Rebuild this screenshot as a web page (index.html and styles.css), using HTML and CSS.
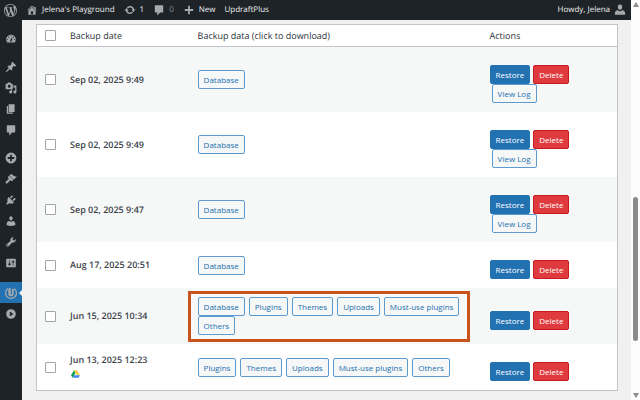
FILE: index.html
```html
<!DOCTYPE html>
<html lang="en">

<head>
    <meta charset="UTF-8">
    <meta name="viewport" content="width=device-width, initial-scale=1.0">
    <title>UpdraftPlus Backups</title>
    <link rel="stylesheet" href="styles.css">
</head>

<body>

    <div class="page">
        <header class="admin-bar">
            <a href="#" class="wp-logo" aria-label="About WordPress">
                <svg class="icon icon-wp" viewBox="0 0 20 20"><path d="M20 10c0-5.51-4.49-10-10-10C4.48 0 0 4.49 0 10c0 5.52 4.48 10 10 10 5.51 0 10-4.48 10-10zM7.78 15.37L4.37 6.22c.55-.02 1.17-.08 1.17-.08.5-.06.44-1.13-.06-1.11 0 0-1.45.11-2.37.11-.18 0-.37 0-.58-.01C4.12 2.69 6.87 1.11 10 1.11c2.33 0 4.45.87 6.05 2.34-.68-.11-1.65.39-1.65 1.58 0 .74.45 1.36.9 2.1.35.61.55 1.36.55 2.46 0 1.49-1.4 5-1.4 5l-3.03-8.37c.54-.02.82-.17.82-.17.5-.05.44-1.25-.06-1.22 0 0-1.44.12-2.38.12-.87 0-2.33-.12-2.33-.12-.5-.03-.56 1.2-.06 1.22l.92.08 1.26 3.41zM17.41 10c.24-.64.74-1.87.43-4.25.7 1.29 1.05 2.71 1.05 4.25 0 3.29-1.73 6.24-4.4 7.78.97-2.59 1.94-5.2 2.92-7.78zM6.1 18.09C3.12 16.65 1.11 13.53 1.11 10c0-1.3.23-2.48.72-3.59C3.25 10.3 4.67 14.2 6.1 18.09zm4.03-6.63l2.58 6.98c-.86.29-1.76.45-2.71.45-.79 0-1.57-.11-2.29-.33.81-2.38 1.62-4.74 2.42-7.1z"/></svg>
            </a>
            <a href="#" class="bar-link">
                <svg class="icon" viewBox="0 0 20 20"><path d="M16 8.5l1.53 1.53-1.06 1.06L10 4.6l-6.47 6.49-1.06-1.06L10 2.5l4 4v-2h2v4zm-6-2.46l6 5.99V18H4v-5.97zM12 17v-5H8v5h4z"/></svg>
                Jelena's Playground
            </a>
            <a href="#" class="bar-link">
                <svg class="icon" viewBox="0 0 20 20"><path d="M10.2 3.28c3.53 0 6.43 2.61 6.92 6h2.08l-3.5 4-3.5-4h2.32c-.45-1.97-2.21-3.45-4.32-3.45-1.45 0-2.73.71-3.54 1.78L4.95 5.66C6.23 4.2 8.11 3.28 10.2 3.28zm-.4 13.44c-3.52 0-6.43-2.61-6.92-6H.8l3.5-4c1.17 1.33 2.33 2.67 3.5 4H5.48c.45 1.97 2.21 3.45 4.32 3.45 1.45 0 2.73-.71 3.54-1.78l1.71 1.95c-1.28 1.46-3.15 2.38-5.25 2.38z"/></svg>
                1
            </a>
            <a href="#" class="bar-link muted">
                <svg class="icon" viewBox="0 0 20 20"><path d="M4 2h12c.6 0 1 .4 1 1v10c0 .6-.4 1-1 1h-4l-5 5v-5H4c-.6 0-1-.4-1-1V3c0-.6.4-1 1-1z"/></svg>
                0
            </a>
            <a href="#" class="bar-link">
                <svg class="icon" viewBox="0 0 20 20"><path d="M17 8.500v3h-5.500v5.500h-3v-5.500H3v-3h5.500V3h3v5.500z"/></svg>
                New
            </a>
            <a href="#" class="bar-link">UpdraftPlus</a>
            <a href="#" class="bar-link account">
                Howdy, Jelena
                <svg class="icon" viewBox="0 0 20 20"><path d="M10 9.500c-2.600 0-3.600-2.500-3.600-4.700C6.400 2.400 7.800 1 10 1s3.600 1.400 3.600 3.800c0 2.200-1 4.700-3.600 4.700zM6 10.500l4 2 4-2c3 .4 4.500 2.500 4.500 5V18h-17v-2.500c0-2.500 1.500-4.600 4.500-5z"/></svg>
            </a>
        </header>

        <div class="wrap">
            <nav class="side-menu">
                <a href="#" class="menu-item" aria-label="Dashboard"><svg class="icon" viewBox="0 0 20 20"><path fill-rule="evenodd" d="M3.76 16h12.48c1.1-1.37 1.76-3.11 1.76-5 0-4.42-3.58-8-8-8s-8 3.58-8 8c0 1.89.66 3.63 1.76 5zM10 4c.55 0 1 .45 1 1s-.45 1-1 1-1-.45-1-1 .45-1 1-1zM6 6c.55 0 1 .45 1 1s-.45 1-1 1-1-.45-1-1 .45-1 1-1zm8 0c.55 0 1 .45 1 1s-.45 1-1 1-1-.45-1-1 .45-1 1-1zm-5.37 5.55L12 7v6c0 1.1-.9 2-2 2s-2-.9-2-2c0-.57.24-1.08.63-1.45zM4 10c.55 0 1 .45 1 1s-.45 1-1 1-1-.45-1-1 .45-1 1-1zm12 0c.55 0 1 .45 1 1s-.45 1-1 1-1-.45-1-1 .45-1 1-1zm-5 3c0-.55-.45-1-1-1s-1 .45-1 1 .45 1 1 1 1-.45 1-1z"/></svg></a>
                <a href="#" class="menu-item group" aria-label="Posts"><svg class="icon" viewBox="0 0 20 20"><path d="M10.440 3.020l1.820-1.820 6.360 6.350-1.830 1.820c-1.050-.68-2.480-.57-3.410.36l-.75.75c-.92.93-1.040 2.350-.35 3.410l-1.830 1.820-2.410-2.410-2.800 2.790c-.42.42-3.380 2.710-3.800 2.290s1.860-3.390 2.280-3.810l2.790-2.790L4.100 9.360l1.830-1.820c1.050.69 2.480.57 3.400-.36l.75-.75c.93-.92 1.050-2.350.36-3.410z"/></svg></a>
                <a href="#" class="menu-item" aria-label="Media"><svg class="icon" viewBox="0 0 20 20"><path d="M13 11V4c0-.55-.45-1-1-1h-1.670L9 1H5L3.670 3H2c-.55 0-1 .45-1 1v7c0 .55.45 1 1 1h10c.55 0 1-.45 1-1zM7 4.500c1.380 0 2.500 1.120 2.500 2.500S8.380 9.500 7 9.500 4.500 8.380 4.500 7 5.620 4.500 7 4.500zM14 6h5v10.500c0 1.380-1.120 2.500-2.500 2.500S14 17.880 14 16.500s1.120-2.500 2.500-2.500c.17 0 .34.02.5.05V9h-3V6zm-4 8.050V13h2v3.500c0 1.380-1.120 2.500-2.500 2.500S7 17.880 7 16.500 8.120 14 9.500 14c.17 0 .34.02.5.05z" fill-rule="evenodd"/></svg></a>
                <a href="#" class="menu-item" aria-label="Pages"><svg class="icon" viewBox="0 0 20 20"><path d="M6 15V2h10v13H6zm-1 1h8v2H3V5h2v11z"/></svg></a>
                <a href="#" class="menu-item" aria-label="Comments"><svg class="icon" viewBox="0 0 20 20"><path d="M4 2h12c.6 0 1 .4 1 1v10c0 .6-.4 1-1 1h-4l-5 5v-5H4c-.6 0-1-.4-1-1V3c0-.6.4-1 1-1z"/></svg></a>
                <a href="#" class="menu-item group" aria-label="Add-ons"><svg class="icon" viewBox="0 0 20 20"><path fill-rule="evenodd" d="M10 1a9 9 0 1 0 0 18 9 9 0 0 0 0-18zM8.500 4.500h3v4h4v3h-4v4h-3v-4h-4v-3h4z"/></svg></a>
                <a href="#" class="menu-item" aria-label="Appearance"><svg class="icon" viewBox="0 0 20 20"><path d="M14.480 11.060L7.410 3.990l1.500-1.500c.5-.56 2.300-.47 3.510.32 1.210.8 1.430 1.280 2.910 2.100 1.180.64 2.450 1.260 4.450.85zm-.71.71L6.700 4.700 4.930 6.470c-.39.39-.39 1.020 0 1.410l1.060 1.060c.39.39.39 1.030 0 1.420-.6.6-1.430 1.110-2.210 1.690-.35.26-.7.53-1.010.84C1.430 14.230.4 16.080 1.400 17.070c.99 1 2.840-.03 4.180-1.360.31-.31.58-.66.85-1.020.57-.78 1.080-1.610 1.690-2.210.39-.39 1.020-.39 1.410 0l1.060 1.060c.39.39 1.020.39 1.410 0z"/></svg></a>
                <a href="#" class="menu-item" aria-label="Plugins"><svg class="icon" viewBox="0 0 20 20"><path d="M13.110 4.360L9.870 7.600 8 5.730l3.240-3.240c.35-.34 1.050-.2 1.560.32.52.51.66 1.210.31 1.550zm-8 1.770l.91-1.120 9.010 9.010-1.190.84c-.71.71-2.630 1.160-3.820 1.160H6.140L4.900 17.260c-.59.59-1.540.59-2.120 0-.59-.58-.59-1.530 0-2.120l1.240-1.240v-3.880c0-1.130.4-3.190 1.090-3.890zm7.260 3.970l3.240-3.240c.34-.35 1.040-.21 1.550.31.52.51.66 1.210.31 1.550l-3.240 3.250z"/></svg></a>
                <a href="#" class="menu-item" aria-label="Users"><svg class="icon" viewBox="0 0 20 20"><path d="M10 9.250c-2.270 0-2.730-3.440-2.730-3.440C7 4.020 7.820 2 9.970 2c2.160 0 2.980 2.020 2.710 3.810 0 0-.41 3.440-2.680 3.440zm0 2.570L12.720 10c2.390 0 4.520 2.330 4.520 4.530v2.490s-3.650 1.130-7.240 1.130c-3.650 0-7.240-1.130-7.240-1.130v-2.490c0-2.250 1.940-4.480 4.470-4.480z"/></svg></a>
                <a href="#" class="menu-item" aria-label="Tools"><svg class="icon" viewBox="0 0 20 20"><path fill-rule="evenodd" d="M16.680 9.770c-1.340 1.340-3.300 1.670-4.950.99l-5.410 6.520c-.99.99-2.590.99-3.580 0s-.99-2.590 0-3.570l6.520-5.420c-.68-1.650-.35-3.610.99-4.950 1.280-1.280 3.120-1.620 4.720-1.060l-2.890 2.890 2.820 2.820 2.860-2.870c.53 1.580.18 3.390-1.080 4.650zM3.810 16.210c.4.39 1.040.39 1.430 0 .4-.4.4-1.040 0-1.430-.39-.4-1.030-.4-1.430 0-.39.39-.39 1.030 0 1.430z"/></svg></a>
                <a href="#" class="menu-item" aria-label="Settings"><svg class="icon" viewBox="0 0 20 20"><path fill-rule="evenodd" d="M18 16V4c0-.55-.45-1-1-1H3c-.55 0-1 .45-1 1v12c0 .55.45 1 1 1h14c.55 0 1-.45 1-1zM8 11h1c.55 0 1 .45 1 1s-.45 1-1 1H8v1.500c0 .28-.22.5-.5.5s-.5-.22-.5-.5V13H6c-.55 0-1-.45-1-1s.45-1 1-1h1V5.500c0-.28.22-.5.5-.5s.5.22.5.5V11zm5-2h-1c-.55 0-1-.45-1-1s.45-1 1-1h1V5.500c0-.28.22-.5.5-.5s.5.22.5.5V7h1c.55 0 1 .45 1 1s-.45 1-1 1h-1v5.500c0 .28-.22.5-.5.5s-.5-.22-.5-.5V9z"/></svg></a>
                <a href="#" class="menu-item last-group active" aria-label="UpdraftPlus"><svg class="icon" viewBox="0 0 20 20"><path d="M5 2.500A9 9 0 1 0 15 2.500" fill="none" stroke="currentColor" stroke-width="2"/><path d="M5.500 3.500v8c0 2.500 2 4 4.500 4s4.500-1.500 4.500-4v-8h-3v9H9.500V.5L5.500 3.500z"/></svg></a>
                <a href="#" class="menu-item" aria-label="Collapse menu"><svg class="icon" viewBox="0 0 20 20"><path fill-rule="evenodd" d="M10 2a8 8 0 1 0 0 16 8 8 0 0 0 0-16zM8 6l6 4-6 4z"/></svg></a>
            </nav>

            <main class="content">
                <table class="backups">
                    <thead>
                        <tr>
                            <th class="col-check"><input type="checkbox" aria-label="Select all backups"></th>
                            <th class="col-date">Backup date</th>
                            <th class="col-data">Backup data (click to download)</th>
                            <th class="col-actions">Actions</th>
                        </tr>
                    </thead>
                    <tbody>
                        <tr>
                            <td class="col-check"><input type="checkbox" aria-label="Select Sep 02, 2025 9:49"></td>
                            <td class="date">Sep 02, 2025 9:49</td>
                            <td><div class="files"><button class="btn">Database</button></div></td>
                            <td class="actions">
                                <div class="action-list">
                                    <button class="btn restore">Restore</button>
                                    <button class="btn delete">Delete</button>
                                    <button class="btn log">View Log</button>
                                </div>
                            </td>
                        </tr>
                        <tr>
                            <td class="col-check"><input type="checkbox" aria-label="Select Sep 02, 2025 9:49"></td>
                            <td class="date">Sep 02, 2025 9:49</td>
                            <td><div class="files"><button class="btn">Database</button></div></td>
                            <td class="actions">
                                <div class="action-list">
                                    <button class="btn restore">Restore</button>
                                    <button class="btn delete">Delete</button>
                                    <button class="btn log">View Log</button>
                                </div>
                            </td>
                        </tr>
                        <tr>
                            <td class="col-check"><input type="checkbox" aria-label="Select Sep 02, 2025 9:47"></td>
                            <td class="date">Sep 02, 2025 9:47</td>
                            <td><div class="files"><button class="btn">Database</button></div></td>
                            <td class="actions">
                                <div class="action-list">
                                    <button class="btn restore">Restore</button>
                                    <button class="btn delete">Delete</button>
                                    <button class="btn log">View Log</button>
                                </div>
                            </td>
                        </tr>
                        <tr>
                            <td class="col-check"><input type="checkbox" aria-label="Select Aug 17, 2025 20:51"></td>
                            <td class="date">Aug 17, 2025 20:51</td>
                            <td><div class="files"><button class="btn">Database</button></div></td>
                            <td class="actions">
                                <div class="action-list">
                                    <button class="btn restore">Restore</button>
                                    <button class="btn delete">Delete</button>
                                </div>
                            </td>
                        </tr>
                        <tr>
                            <td class="col-check"><input type="checkbox" aria-label="Select Jun 15, 2025 10:34"></td>
                            <td class="date">Jun 15, 2025 10:34</td>
                            <td>
                                <div class="files highlight">
                                    <button class="btn">Database</button>
                                    <button class="btn">Plugins</button>
                                    <button class="btn">Themes</button>
                                    <button class="btn">Uploads</button>
                                    <button class="btn">Must-use plugins</button>
                                    <button class="btn">Others</button>
                                </div>
                            </td>
                            <td class="actions">
                                <div class="action-list">
                                    <button class="btn restore">Restore</button>
                                    <button class="btn delete">Delete</button>
                                </div>
                            </td>
                        </tr>
                        <tr>
                            <td class="col-check"><input type="checkbox" aria-label="Select Jun 13, 2025 12:23"></td>
                            <td class="date">
                                Jun 13, 2025 12:23
                                <svg class="drive" viewBox="0 0 24 22" role="img" aria-label="Google Drive">
                                    <path fill="#0f9d58" d="M8 1l4 7-7.500 13L0 14z"/>
                                    <path fill="#ffcd40" d="M8 1h8l8 13h-8z"/>
                                    <path fill="#4285f4" d="M8.500 14H24l-4 7H4.500z"/>
                                </svg>
                            </td>
                            <td>
                                <div class="files">
                                    <button class="btn">Plugins</button>
                                    <button class="btn">Themes</button>
                                    <button class="btn">Uploads</button>
                                    <button class="btn">Must-use plugins</button>
                                    <button class="btn">Others</button>
                                </div>
                            </td>
                            <td class="actions">
                                <div class="action-list">
                                    <button class="btn restore">Restore</button>
                                    <button class="btn delete">Delete</button>
                                </div>
                            </td>
                        </tr>
                    </tbody>
                </table>
            </main>
        </div>
    </div>

    <div class="scrollbar">
        <span class="arrow up"></span>
        <div class="track"><div class="thumb"></div></div>
        <span class="arrow down"></span>
    </div>

</body>

</html>
```

FILE: styles.css
```css
* {
    box-sizing: border-box;
}

body {
    margin: 0;
    min-height: 100vh;
    display: flex;
    background-color: #f0f0f1;
    color: #3c434a;
    font-family: "Open Sans", "Noto Sans", sans-serif;
    font-size: 8px;
    text-rendering: geometricPrecision;
}

a {
    color: inherit;
    text-decoration: none;
}

.page {
    flex: 1;
    display: flex;
    flex-direction: column;
}

.icon {
    display: block;
    flex: none;
    width: 12px;
    height: 12px;
    fill: currentColor;
    color: #a7aaad;
}

/* top bar */
.admin-bar {
    display: flex;
    align-items: center;
    gap: 9px;
    height: 20px;
    padding: 0 5px 0 4px;
    background-color: #1d2327;
    color: #f0f0f1;
}

.icon-wp {
    width: 13px;
    height: 13px;
}

.bar-link {
    display: flex;
    align-items: center;
    gap: 4px;
    line-height: 20px;
}

.muted {
    color: #8c8f94;
}

.account {
    margin-left: auto;
}

/* left menu */
.wrap {
    flex: 1;
    display: flex;
}

.side-menu {
    flex: none;
    width: 22px;
    padding-top: 8px;
    background-color: #1d2327;
}

.menu-item {
    display: flex;
    align-items: center;
    justify-content: center;
    height: 21px;
}

.group {
    margin-top: 7px;
}

.last-group {
    margin-top: 9px;
}

.active {
    position: relative;
    background-color: #2271b1;
}

.active::after {
    content: "";
    position: absolute;
    right: 0;
    top: 8px;
    border: 3px solid transparent;
    border-left: 0;
    border-right-color: #f0f0f1;
}

/* backups table */
.content {
    flex: 1;
    padding: 4px 13px 8px 14px;
}

.backups {
    width: 100%;
    table-layout: fixed;
    border-collapse: separate;
    border-spacing: 0;
    border: 1px solid #c3c4c7;
    background-color: #fff;
}

th,
td {
    padding: 0 6px;
    text-align: left;
    vertical-align: middle;
}

td {
    padding: 9px 6px;
}

th {
    height: 22px;
    border-bottom: 1px solid #c3c4c7;
    color: #2c3338;
    font-size: 9px;
    font-weight: 500;
}

tbody tr:nth-child(odd) {
    background-color: #f6f7f7;
}

.col-check {
    width: 27px;
    padding: 0 0 0 8px;
}

.col-date {
    width: 22%;
}

.col-actions {
    width: 23%;
}

input[type="checkbox"] {
    appearance: none;
    display: block;
    width: 11px;
    height: 11px;
    margin: 0;
    border: 1px solid #a0a3a7;
    border-radius: 1px;
    background-color: #fff;
}

.date {
    font-size: 9px;
    font-weight: 600;
    line-height: 14px;
}

.drive {
    display: block;
    width: 9px;
    height: 14px;
    margin-left: 1px;
}

.files {
    display: flex;
    flex-wrap: wrap;
    column-gap: 4px;
}

.highlight {
    position: relative;
}

/* frame around the files of one backup set */
.highlight::after {
    content: "";
    position: absolute;
    top: -6px;
    right: 8px;
    bottom: -7px;
    left: -10px;
    border: 3px solid #c9531f;
    pointer-events: none;
}

.actions {
    padding-top: 18px;
}

.action-list {
    display: flex;
    flex-wrap: wrap;
    column-gap: 3px;
    max-width: 96px;
}

.btn {
    height: 19px;
    padding: 0 5px;
    border: 1px solid #5b9bd0;
    border-radius: 2px;
    background-color: #f6f7f7;
    color: #2271b1;
    font: inherit;
    line-height: 17px;
    white-space: nowrap;
}

.restore {
    border-color: #2271b1;
    background-color: #2271b1;
    color: #fff;
}

.delete {
    border-color: #c9181f;
    background-color: #df3a3d;
    color: #fff;
}

.log {
    margin-left: 2px;
}

/* scrollbar */
.scrollbar {
    flex: none;
    display: flex;
    flex-direction: column;
    align-items: center;
    width: 9px;
    padding: 2px 0;
    background-color: #fcfcfc;
}

.track {
    flex: 1;
    width: 5px;
    display: flex;
    flex-direction: column;
    justify-content: flex-end;
    padding-bottom: 52px;
}

.thumb {
    height: 43%;
    border-radius: 3px;
    background-color: #8b8b8b;
}

.arrow {
    border: 3px solid transparent;
}

.up {
    border-top: 0;
    border-bottom: 5px solid #8b8b8b;
}

.down {
    border-bottom: 0;
    border-top: 5px solid #8b8b8b;
}
```
